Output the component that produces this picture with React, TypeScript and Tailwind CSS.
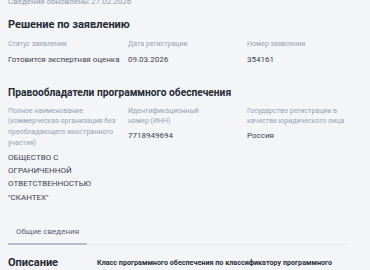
import React from 'react';

const Field = ({ label, value, gap = 'mt-[2px]' }: { label: React.ReactNode; value: React.ReactNode; gap?: string }) => (
  <div className="flex flex-col">
    <div className="text-[7px] leading-[10.8px] text-[#97a0b3]">{label}</div>
    <div className={`${gap} text-[8px] leading-[13.3px] text-[#3a3f4b]`}>{value}</div>
  </div>
);

export default function App() {
  return (
    <div className="h-[270px] w-[370px] overflow-hidden bg-[#f4f5f9] px-2 font-['Segoe_UI',Roboto,sans-serif]">
      <div className="-mt-[3px] text-[8px] leading-[10px] text-[#8f98ab]">Сведения обновлены 27.02.2026</div>

      <h2 className="mt-[10.5px] text-[11px] font-bold leading-[14px] text-[#252a33]">Решение по заявлению</h2>
      <div className="mt-[7px] grid grid-cols-[112px_111px_1fr] gap-x-2">
        <Field gap="mt-[4px]" label="Статус заявления" value="Готовится экспертная оценка" />
        <Field gap="mt-[4px]" label="Дата регистрации" value="09.03.2026" />
        <Field gap="mt-[4px]" label="Номер заявления" value="354161" />
      </div>

      <h2 className="mt-[19px] text-[10.2px] font-bold leading-[14px] text-[#252a33]">Правообладатели программного обеспечения</h2>
      <div className="mt-[6px] grid grid-cols-[112px_111px_1fr] gap-x-2">
        <Field
          label={<span className="block w-[112px]">Полное наименование (коммерческая организация без преобладающего иностранного участия)</span>}
          value={<span className="block w-[90px]">ОБЩЕСТВО С ОГРАНИЧЕННОЙ ОТВЕТСТВЕННОСТЬЮ "СКАНТЕХ"</span>}
        />
        <Field label={<span className="block w-[90px]">Идентификационный номер (ИНН)</span>} value="7718949694" />
        <Field label="Государство регистрации в качестве юридического лица" value="Россия" />
      </div>

      <div className="mt-[22px] mr-[15px] flex border-b border-[#e6e8ee]">
        <div className="-mb-px border-b-2 border-[#b4bccb] px-[8px] pb-[5px] text-[8px] leading-[12px] text-[#5b6272]">
          Общие сведения
        </div>
      </div>

      <div className="mt-[11px] flex">
        <h2 className="w-[89px] shrink-0 text-[11px] font-bold leading-[14px] text-[#252a33]">Описание</h2>
        <div className="w-[245px] pt-[2px] text-[7.2px] font-bold leading-[10.5px] text-[#2a2f3a]">
          Класс программного обеспечения по классификатору программного обеспечения, утвержденному приказом от 02.03.2022 № 406
        </div>
      </div>
    </div>
  );
}
